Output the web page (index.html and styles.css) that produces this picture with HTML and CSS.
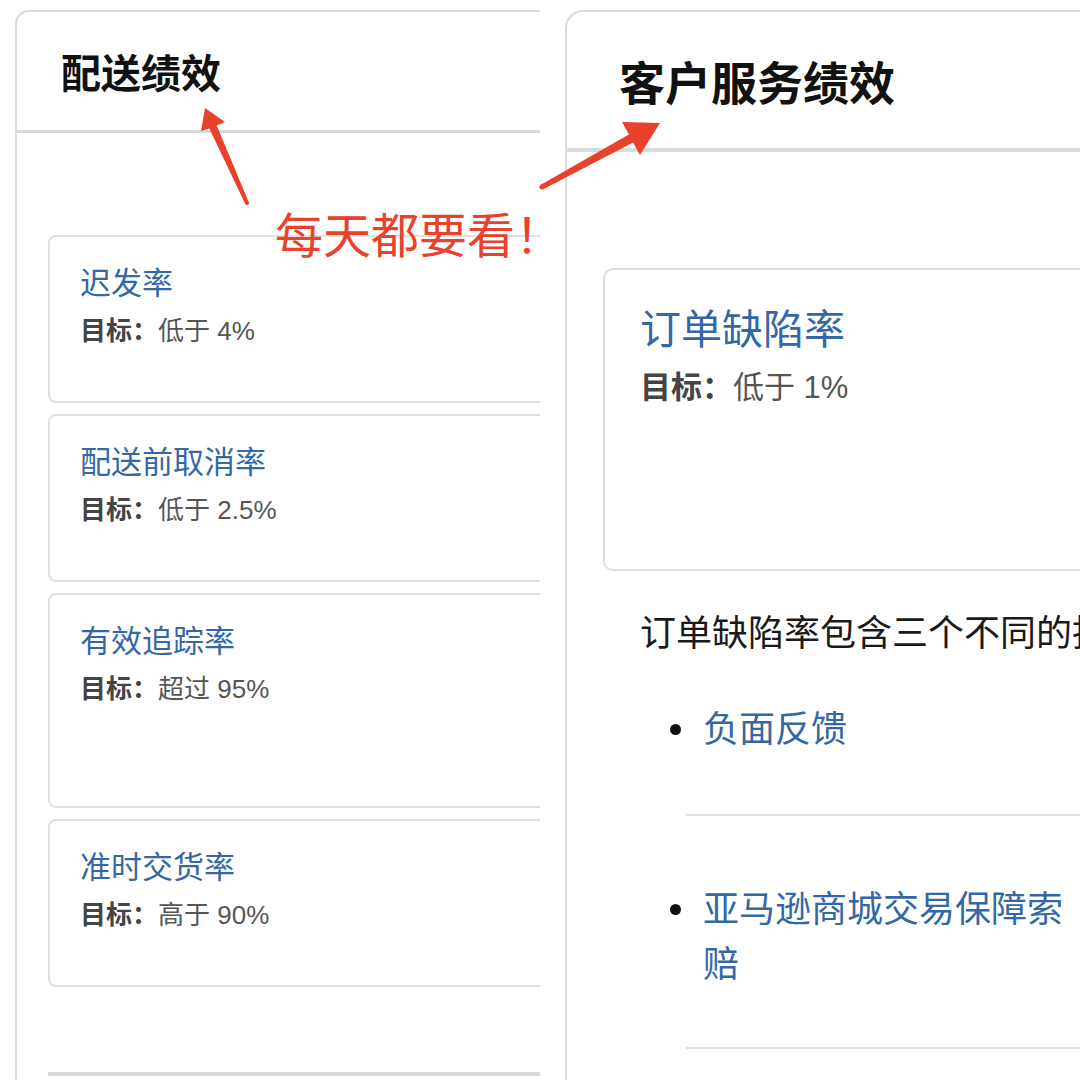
FILE: index.html
```html
<!DOCTYPE html>
<html lang="zh-CN">
<head>
    <meta charset="UTF-8">
    <meta name="viewport" content="width=device-width, initial-scale=1.0">
    <title>卖家绩效</title>
    <link rel="stylesheet" href="styles.css">
</head>
<body>
    <div class="collage">
        <section class="shot shot-left">
            <div class="panel">
                <div class="panel-head">
                    <h2>配送绩效</h2>
                </div>
                <div class="panel-body">
                    <div class="metric">
                        <a class="metric-title">迟发率</a>
                        <p class="metric-goal"><b>目标：</b>低于 4%</p>
                    </div>
                    <div class="metric">
                        <a class="metric-title">配送前取消率</a>
                        <p class="metric-goal"><b>目标：</b>低于 2.5%</p>
                    </div>
                    <div class="metric tall">
                        <a class="metric-title">有效追踪率</a>
                        <p class="metric-goal"><b>目标：</b>超过 95%</p>
                    </div>
                    <div class="metric">
                        <a class="metric-title">准时交货率</a>
                        <p class="metric-goal"><b>目标：</b>高于 90%</p>
                    </div>
                    <div class="panel-rule"></div>
                </div>
            </div>
        </section>

        <section class="shot shot-right">
            <div class="panel">
                <div class="panel-head">
                    <h2>客户服务绩效</h2>
                </div>
                <div class="panel-body">
                    <div class="metric">
                        <a class="metric-title">订单缺陷率</a>
                        <p class="metric-goal"><b>目标：</b>低于 1%</p>
                    </div>
                    <p class="intro">订单缺陷率包含三个不同的指标：</p>
                    <ul class="parts">
                        <li><a>负面反馈</a></li>
                        <li><a>亚马逊商城交易保障索赔</a></li>
                    </ul>
                </div>
            </div>
        </section>
    </div>

    <div class="note">每天都要看！</div>

    <svg class="arrows" width="1080" height="1080" viewBox="0 0 1080 1080">
        <!-- arrow to 配送绩效 -->
        <polygon points="205,108 225,122 216.7,125.4 248.8,202.2 245.2,203.8 209.3,128.6 201,131" />
        <circle cx="247" cy="203" r="2" />
        <!-- arrow to 客户服务绩效 -->
        <polygon points="660,123 640,155 633.1,142.5 543.2,189.2 540.8,184.8 628.9,134.5 622,122" />
        <circle cx="542" cy="187" r="2.5" />
    </svg>
</body>
</html>
```

FILE: styles.css
```css
body {
    margin: 0;
    background-color: #fff;
    font-family: "Liberation Sans", "Noto Sans CJK SC", sans-serif;
    color: #222;
}

.collage {
    display: flex;
    width: 1080px;
    height: 1080px;
    overflow: hidden;
}

.shot {
    flex: none;
    width: 540px;
    height: 1080px;
    overflow: hidden;
    box-sizing: border-box;
}

.shot-left {
    padding: 10px 0 0 15px;
}

.shot-right {
    padding: 10px 0 0 25px;
}

.panel {
    width: 700px;
    min-height: 1200px;
    border: 2px solid #dcdcdc;
    border-right: none;
    border-radius: 14px 0 0 0;
}

.panel-head {
    display: flex;
    align-items: center;
    height: 118px;
    padding-left: 44px;
    border-bottom: 3px solid #d8dbdc;
}

.panel-head h2 {
    margin: 0;
    font-size: 40px;
    font-weight: bold;
    color: #111;
}

.panel-body {
    padding: 102px 0 0 31px;
}

.metric {
    box-sizing: border-box;
    width: 620px;
    height: 168px;
    margin-bottom: 11px;
    padding: 28px 0 0 30px;
    border: 2px solid #e1e1e1;
    border-radius: 8px;
}

.metric.tall {
    height: 215px;
}

.metric-title {
    display: block;
    font-size: 31px;
    line-height: 38px;
    color: #3467a6;
}

.metric-goal {
    margin: 12px 0 0;
    font-size: 26px;
    line-height: 32px;
    color: #555;
}

.metric-goal b {
    color: #444;
}

.panel-rule {
    height: 4px;
    margin-top: 85px;
    background-color: #d6d9db;
}

/* right screenshot is zoomed in a bit more */
.shot-right .panel {
    border-radius: 18px 0 0 0;
}

.shot-right .panel-head {
    height: 136px;
    padding-left: 52px;
    border-bottom-width: 4px;
}

.shot-right .panel-head h2 {
    font-size: 46px;
}

.shot-right .panel-body {
    padding: 116px 0 0 36px;
}

.shot-right .metric {
    height: 303px;
    margin-bottom: 0;
    padding: 35px 0 0 35px;
    border-color: #dedede;
    border-radius: 10px;
}

.shot-right .metric-title {
    font-size: 41px;
    line-height: 50px;
}

.shot-right .metric-goal {
    margin-top: 14px;
    font-size: 31px;
    line-height: 38px;
}

.intro {
    margin: 39px 0 0 37px;
    font-size: 36px;
    line-height: 48px;
    white-space: nowrap;
    color: #1a1a1a;
}

.parts {
    width: 397px;
    margin: 44px 0 0 83px;
    padding: 0;
    list-style: none;
}

.parts li {
    position: relative;
    padding: 66px 0 55px 17px;
    border-bottom: 2px solid #dfe1e2;
    font-size: 36px;
    line-height: 55px;
    color: #3467a6;
}

.parts li:first-child {
    padding-top: 0;
    padding-bottom: 57px;
}

.parts li::before {
    content: "";
    position: absolute;
    left: -16px;
    top: 88px;
    width: 11px;
    height: 11px;
    border-radius: 50%;
    background-color: #111;
}

.parts li:first-child::before {
    top: 22px;
}

.note {
    position: absolute;
    left: 275px;
    top: 208px;
    font-family: "Noto Sans CJK SC", sans-serif;
    font-size: 48px;
    line-height: 48px;
    color: #e8412c;
}

.arrows {
    position: absolute;
    left: 0;
    top: 0;
    pointer-events: none;
    fill: #e8412c;
}
```
